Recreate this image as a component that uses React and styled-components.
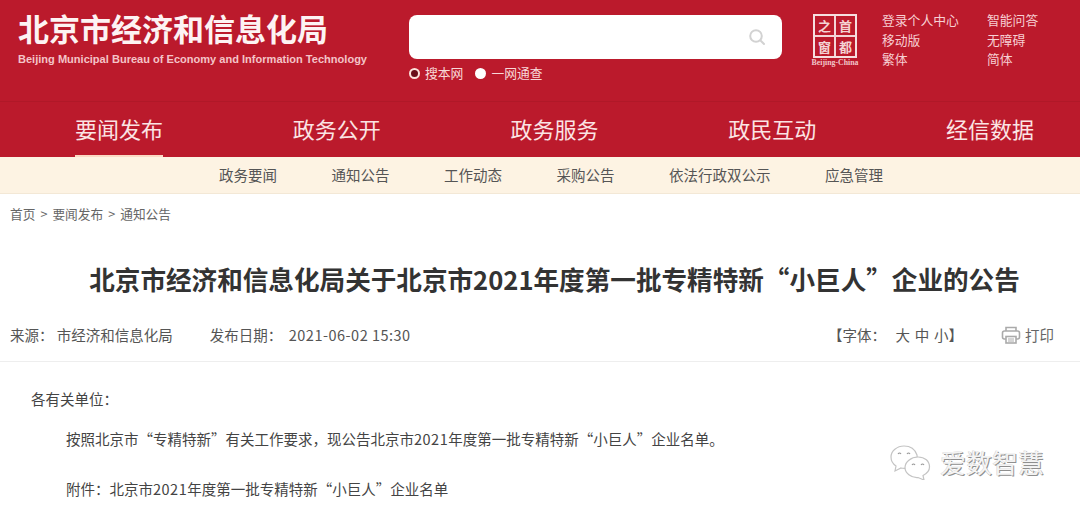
import React from "react";
import styled, { createGlobalStyle } from "styled-components";

const Global = createGlobalStyle`
  html, body { margin: 0; padding: 0; background: #fff; overflow: hidden; }
  body { font-family: "Noto Sans CJK SC", "Liberation Sans", sans-serif; }
  * { box-sizing: border-box; }
`;
const Page = styled.div`position: relative; width: 1080px; height: 509px; overflow: hidden;`;
const Header = styled.header`
  height: 102px; background: #bb1a2c; display: flex; align-items: flex-start;
  border-bottom: 1px solid #b01828;
`;
const Brand = styled.div`width: 409px; padding: 10px 0 0 18px; flex: none;`;
const BrandName = styled.div`
  font-size: 31px; line-height: 36px; font-weight: 700; color: #fdf3f3; white-space: nowrap;
`;
const BrandEn = styled.div`
  font-family: "Liberation Sans", sans-serif;
  font-size: 11.06px; line-height: 14px; margin-top: 6px; font-weight: 700; color: #f4c4c8; white-space: nowrap;
`;
const SearchArea = styled.div`width: 373px; flex: none; padding-top: 15px;`;
const SearchBox = styled.div`
  height: 44px; background: #fff; border-radius: 8px; display: flex; align-items: center;
  justify-content: flex-end; padding-right: 16px; color: #d2d2d2;
`;
const Scopes = styled.div`display: flex; align-items: center; margin-top: 6px; height: 16px;`;
const Scope = styled.span`
  display: flex; align-items: center; font-size: 12.8px; line-height: 16px; color: #f8d8d8; margin-right: 12px; white-space: nowrap;
`;
const Dot = styled.i`
  width: 11px; height: 11px; border-radius: 50%; margin: 0 5px 0 0;
  background: ${p => (p.$on ? "#6a0d18" : "#fff")};
  border: ${p => (p.$on ? "2px solid #fbe3dc" : "none")};
`;
const Seal = styled.div`
  flex: none; margin: 14px 0 0 31px; width: 44px; display: flex; flex-direction: column; align-items: center;
`;
const SealBox = styled.div`
  width: 44px; height: 44px; border: 2px solid #f6dfe0; display: grid;
  grid-template: 1fr 1fr / 1fr 1fr; gap: 2px; background: #f4d3d6;
`;
const SealCell = styled.span`
  display: flex; align-items: center; justify-content: center; background: #bb1a2c;
  font-size: 13px; line-height: 13px; color: #f4d2d4; font-weight: 700;
`;
const SealCaption = styled.div`
  font: 700 7.8px/8px "Liberation Serif", serif; color: #f2c6ca; margin-top: 1px; white-space: nowrap;
`;
const Links = styled.div`
  flex: none; margin: 10px 0 0 25px; display: grid; grid-template-columns: 105px 80px; grid-auto-rows: 19.5px;
`;
const LinkItem = styled.a`font-size: 12.8px; line-height: 19.5px; color: #f7cfd3; white-space: nowrap;`;
const Nav = styled.nav`
  height: 55px; background: #bb1a2c; display: flex; justify-content: space-between; padding: 0 46px 0 75px;
`;
const NavItem = styled.a`
  font-size: 22px; line-height: 52px; height: 55px; color: #fbe4e4; white-space: nowrap;
  border-bottom: 2px solid ${p => (p.$active ? "#fbd9c4" : "transparent")};
`;
const SubNav = styled.div`
  height: 37px; background: #fdf3e3; border-bottom: 1px solid #f3e8d6; display: flex; gap: 54.5px; padding-left: 219px;
`;
const SubItem = styled.a`font-size: 14.5px; line-height: 35px; color: #555; white-space: nowrap;`;
const Crumbs = styled.div`
  padding: 11px 0 0 10px; display: flex; gap: 5px; font-size: 12.7px; line-height: 18px; color: #666;
`;
const Title = styled.h1`
  margin: 38px 0 0; padding-left: 29px; text-align: center; font-size: 25.6px; line-height: 36px; font-weight: 700; color: #333; white-space: nowrap;
`;
const Meta = styled.div`
  height: 40px; margin-top: 25px; padding: 3px 26px 0 10px; display: flex; align-items: flex-start;
  border-bottom: 1px solid #eee; font-size: 14.5px; line-height: 20px; color: #555;
`;
const MetaItem = styled.span`margin-right: 37px; white-space: nowrap;`;
const Num = styled.span`letter-spacing: ${p => p.$spacing}px;`;
const MetaRight = styled.div`margin-left: auto; display: flex; align-items: center; white-space: pre;`;
const FontSizes = styled.span`word-spacing: 1.5px;`;
const Print = styled.span`display: flex; align-items: center; gap: 4px; margin-left: 38px; color: #666;`;
const Article = styled.article`font-size: 14.5px; line-height: 20px; color: #444;`;
const Salute = styled.p`margin: 27px 0 0 31px; white-space: nowrap;`;
const Para = styled.p`margin: ${p => p.$gap}px 0 0 66px; white-space: nowrap;`;
const Watermark = styled.div`
  position: absolute; left: 890px; top: 444px; display: flex; align-items: center; gap: 9px;
`;
const MarkText = styled.span`
  font-size: 26px; line-height: 34px; color: #f4f4f4; white-space: nowrap;
  text-shadow: 1px 1px 0 #8f8f8f, -0.5px -0.5px 0 #cfcfcf;
`;

const SearchIcon = () => (
  <svg width="18" height="18" viewBox="0 0 18 18" fill="none" stroke="currentColor" strokeWidth="2">
    <circle cx="8" cy="8" r="5.8" />
    <path d="M12.5 12.5 16 16" strokeLinecap="round" />
  </svg>
);
const PrinterIcon = () => (
  <svg width="20" height="20" viewBox="0 0 20 20" fill="none" stroke="#aaa" strokeWidth="1.6">
    <path d="M5 6V2.500h10V6" />
    <rect x="1.500" y="6" width="17" height="8" rx="2" />
    <rect x="5" y="11.500" width="10" height="6.500" fill="#fff" />
    <path d="M7 14h6M7 16h6" strokeWidth="1" />
  </svg>
);
const ChatIcon = () => (
  <svg width="41" height="36" viewBox="0 0 41 36" fill="#fff" stroke="#c4c4c4" strokeWidth="1.2">
    <path d="M14 2C7 2 1 7 1 13c0 4 2 7 5 9l-1 5 6-3c2 .5 4 .5 5 .3C24 22 28 17 27 11 25 5 20 2 14 2Z" />
    <path d="M28 13c-7 0-13 5-13 10.500S21 34 28 33.500l6 2.500-1-4.500c4-2 6.500-5 6.500-8.500C39.500 17 35 13 28 13Z" />
    <path d="M8 10q1.500-2 3 0M17 10q1.500-2 3 0M22 21q1.500-2 3 0M31 21q1.500-2 3 0" fill="none" stroke="#999" />
  </svg>
);

const navItems = ["要闻发布", "政务公开", "政务服务", "政民互动", "经信数据"];
const subItems = ["政务要闻", "通知公告", "工作动态", "采购公告", "依法行政双公示", "应急管理"];
const links = ["登录个人中心", "智能问答", "移动版", "无障碍", "繁体", "简体"];

export default function App() {
  return (
    <Page>
      <Global />
      <Header>
        <Brand>
          <BrandName>北京市经济和信息化局</BrandName>
          <BrandEn>Beijing Municipal Bureau of Economy and Information Technology</BrandEn>
        </Brand>
        <SearchArea>
          <SearchBox><SearchIcon /></SearchBox>
          <Scopes>
            <Scope><Dot $on />搜本网</Scope>
            <Scope><Dot />一网通查</Scope>
          </Scopes>
        </SearchArea>
        <Seal>
          <SealBox>
            <SealCell>之</SealCell><SealCell>首</SealCell>
            <SealCell>窗</SealCell><SealCell>都</SealCell>
          </SealBox>
          <SealCaption>Beijing-China</SealCaption>
        </Seal>
        <Links>{links.map(l => <LinkItem key={l}>{l}</LinkItem>)}</Links>
      </Header>
      <Nav>{navItems.map((n, i) => <NavItem key={n} $active={i === 0}>{n}</NavItem>)}</Nav>
      <SubNav>{subItems.map(s => <SubItem key={s}>{s}</SubItem>)}</SubNav>
      <Crumbs><span>首页</span><span>&gt;</span><span>要闻发布</span><span>&gt;</span><span>通知公告</span></Crumbs>
      <Title>北京市经济和信息化局关于北京市2021年度第一批专精特新“小巨人”企业的公告</Title>
      <Meta>
        <MetaItem>来源：&nbsp;市经济和信息化局</MetaItem>
        <MetaItem>发布日期：&nbsp;&nbsp;<Num $spacing={0.5}>2021-06-02 15:30</Num></MetaItem>
        <MetaRight>
          <FontSizes>{"【字体：  大 中 小】"}</FontSizes>
          <Print><PrinterIcon />打印</Print>
        </MetaRight>
      </Meta>
      <Article>
        <Salute>各有关单位：</Salute>
        <Para $gap={20}>按照北京市“专精特新”有关工作要求，现公告北京市<Num $spacing={0.5}>2021</Num>年度第一批专精特新“小巨人”企业名单。</Para>
        <Para $gap={30}>附件：北京市<Num $spacing={0.5}>2021</Num>年度第一批专精特新“小巨人”企业名单</Para>
      </Article>
      <Watermark><ChatIcon /><MarkText>爱数智慧</MarkText></Watermark>
    </Page>
  );
}
